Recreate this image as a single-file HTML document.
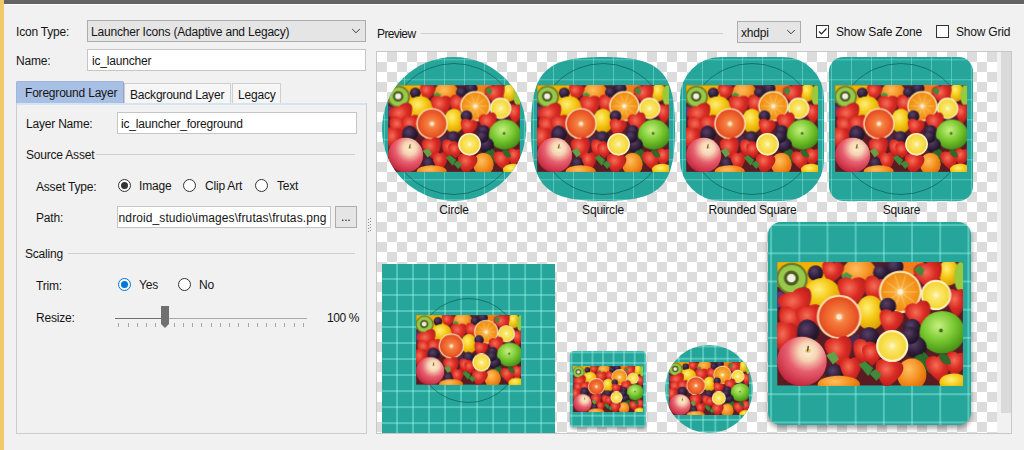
<!DOCTYPE html>
<html><head><meta charset="utf-8">
<style>
*{margin:0;padding:0;box-sizing:border-box}
html,body{width:1024px;height:450px;overflow:hidden;background:#f1f1f1;position:relative}
body{font-family:"Liberation Sans",sans-serif;font-size:12px;color:#111}
.a{position:absolute}
.t{position:absolute;font:12px/14px "Liberation Sans",sans-serif;white-space:nowrap;color:#151515;letter-spacing:-0.2px}
.box{position:absolute;border:1px solid #c5c5c5;background:#fff}
.combo{position:absolute;border:1px solid #adadad;background:#e5e5e5}
.radio{position:absolute;width:13px;height:13px;border:1px solid #333;border-radius:50%;background:#fff}
.radio.on::after{content:"";position:absolute;left:2px;top:2px;width:7px;height:7px;border-radius:50%;background:#333}
.radio.blue{border-color:#0078d7}
.radio.blue::after{content:"";position:absolute;left:2px;top:2px;width:7px;height:7px;border-radius:50%;background:#0078d7}
.chk{position:absolute;width:13px;height:13px;border:1px solid #333;background:#fff}
.sep{position:absolute;height:1px;background:#cfcfcf}
.tick{position:absolute;top:323px;width:1px;height:4px;background:#a6a6a6}
.icon{position:absolute;overflow:hidden;background-color:#26a69a;background-image:linear-gradient(90deg,rgba(170,255,245,.36) 1.5px,transparent 1.5px),linear-gradient(180deg,rgba(170,255,245,.36) 1.5px,transparent 1.5px)}
.fr{position:absolute;display:block}
.safe{position:absolute;border:1px solid rgba(10,80,72,.6);border-radius:50%}
.lbl{position:absolute;width:120px;text-align:center;font:12px/14px "Liberation Sans",sans-serif;color:#151515;white-space:nowrap;letter-spacing:-0.2px}
</style></head><body>
<!-- window chrome -->
<div class="a" style="left:0;top:0;width:4px;height:450px;background:#f0ca6a"></div>
<div class="a" style="left:4px;top:0;width:1020px;height:4px;background:#636363"></div>
<div class="a" style="left:4px;top:4px;width:1020px;height:1px;background:#fbfbfb"></div>

<!-- Icon type / name -->
<div class="t" style="left:16px;top:25px">Icon Type:</div>
<div class="combo" style="left:87px;top:20px;width:279px;height:22px"></div>
<div class="t" style="left:91px;top:25px">Launcher Icons (Adaptive and Legacy)</div>
<svg class="a" style="left:351px;top:28px" width="10" height="7" viewBox="0 0 10 7"><path d="M1.2 1 L5 4.8 L8.8 1" fill="none" stroke="#3a3a3a" stroke-width="1"/></svg>

<div class="t" style="left:16px;top:54px">Name:</div>
<div class="box" style="left:87px;top:49px;width:279px;height:22px"></div>
<div class="t" style="left:92px;top:54px">ic_launcher</div>

<!-- tabs -->
<div class="a" style="left:16px;top:103px;width:351px;height:331px;border:1px solid #cdcdcd;background:#f1f1f1"></div>
<div class="a" style="left:17px;top:103px;width:349px;height:2px;background:#d6e3f3"></div>
<div class="a" style="left:16px;top:81px;width:108px;height:22px;background:#a8c0e4;border:1px solid #a0b6d8;border-right-color:#95a6c2;border-bottom:none;border-radius:2px 2px 0 0"></div>
<div class="t" style="left:25px;top:86px">Foreground Layer</div>
<div class="a" style="left:124px;top:83px;width:107px;height:20px;background:#f6f6f6;border:1px solid #cfcfcf;border-bottom:none"></div>
<div class="t" style="left:130px;top:88px">Background Layer</div>
<div class="a" style="left:232px;top:83px;width:49px;height:20px;background:#f6f6f6;border:1px solid #cfcfcf;border-bottom:none"></div>
<div class="t" style="left:238px;top:88px">Legacy</div>

<div class="t" style="left:26px;top:117px">Layer Name:</div>
<div class="box" style="left:117px;top:112px;width:240px;height:22px"></div>
<div class="t" style="left:121px;top:117px">ic_launcher_foreground</div>

<div class="t" style="left:26px;top:148px">Source Asset</div>
<div class="sep" style="left:96px;top:154px;width:259px"></div>

<div class="t" style="left:36px;top:180px">Asset Type:</div>
<div class="radio on" style="left:118px;top:179px"></div>
<div class="t" style="left:139px;top:179px">Image</div>
<div class="radio" style="left:183px;top:179px"></div>
<div class="t" style="left:205px;top:179px">Clip Art</div>
<div class="radio" style="left:255px;top:179px"></div>
<div class="t" style="left:277px;top:179px">Text</div>

<div class="t" style="left:36px;top:211px">Path:</div>
<div class="box" style="left:117px;top:206px;width:214px;height:22px;overflow:hidden"><div class="t" style="right:3.5px;top:4px;letter-spacing:0.1px">ndroid_studio\images\frutas\frutas.png</div></div>
<div class="combo" style="left:335px;top:206px;width:22px;height:22px"></div>
<div class="t" style="left:341px;top:210px">...</div>

<div class="t" style="left:25px;top:247px">Scaling</div>
<div class="sep" style="left:68px;top:253px;width:287px"></div>

<div class="t" style="left:36px;top:279px">Trim:</div>
<div class="radio blue" style="left:118px;top:278px"></div>
<div class="t" style="left:139px;top:278px">Yes</div>
<div class="radio" style="left:178px;top:278px"></div>
<div class="t" style="left:199px;top:278px">No</div>

<div class="t" style="left:36px;top:311px">Resize:</div>
<div class="a" style="left:115px;top:318px;width:46px;height:1px;background:#707070"></div>
<div class="a" style="left:169px;top:318px;width:138px;height:1px;background:#a8a8a8"></div>
<div class="tick" style="left:118px"></div><div class="tick" style="left:128px"></div><div class="tick" style="left:137px"></div><div class="tick" style="left:146px"></div><div class="tick" style="left:155px"></div><div class="tick" style="left:165px"></div><div class="tick" style="left:174px"></div><div class="tick" style="left:183px"></div><div class="tick" style="left:192px"></div><div class="tick" style="left:201px"></div><div class="tick" style="left:211px"></div><div class="tick" style="left:220px"></div><div class="tick" style="left:229px"></div><div class="tick" style="left:238px"></div><div class="tick" style="left:248px"></div><div class="tick" style="left:257px"></div><div class="tick" style="left:266px"></div><div class="tick" style="left:275px"></div><div class="tick" style="left:284px"></div><div class="tick" style="left:294px"></div><div class="tick" style="left:303px"></div>
<svg class="a" style="left:160px;top:306px" width="10" height="23" viewBox="0 0 10 23"><path d="M1 0 H9 V18 L5 22 L1 18 Z" fill="#707070"/></svg>
<div class="t" style="left:327px;top:311px;letter-spacing:-0.4px">100 %</div>

<div class="a" style="left:368px;top:219px;width:1px;height:1px;background:#8a8a8a"></div><div class="a" style="left:370px;top:218px;width:1px;height:1px;background:#8a8a8a"></div><div class="a" style="left:368px;top:222px;width:1px;height:1px;background:#8a8a8a"></div><div class="a" style="left:370px;top:221px;width:1px;height:1px;background:#8a8a8a"></div><div class="a" style="left:368px;top:225px;width:1px;height:1px;background:#8a8a8a"></div><div class="a" style="left:370px;top:224px;width:1px;height:1px;background:#8a8a8a"></div><div class="a" style="left:368px;top:228px;width:1px;height:1px;background:#8a8a8a"></div><div class="a" style="left:370px;top:227px;width:1px;height:1px;background:#8a8a8a"></div><div class="a" style="left:368px;top:231px;width:1px;height:1px;background:#8a8a8a"></div><div class="a" style="left:370px;top:230px;width:1px;height:1px;background:#8a8a8a"></div>
<!-- preview header -->
<div class="t" style="left:377px;top:27px;letter-spacing:-0.6px">Preview</div>
<div class="sep" style="left:421px;top:33px;width:302px"></div>
<div class="combo" style="left:737px;top:21px;width:64px;height:22px"></div>
<div class="t" style="left:741px;top:26px">xhdpi</div>
<svg class="a" style="left:786px;top:29px" width="10" height="7" viewBox="0 0 10 7"><path d="M1.2 1 L5 4.8 L8.8 1" fill="none" stroke="#3a3a3a" stroke-width="1"/></svg>
<div class="chk" style="left:816px;top:25px"></div>
<svg class="a" style="left:816px;top:25px" width="13" height="13" viewBox="0 0 13 13"><path d="M3 6.5 L5.5 9 L10.5 3.5" fill="none" stroke="#222" stroke-width="1.2"/></svg>
<div class="t" style="left:836px;top:25px">Show Safe Zone</div>
<div class="chk" style="left:936px;top:25px"></div>
<div class="t" style="left:956px;top:25px">Show Grid</div>

<!-- preview panel -->
<div class="a" style="left:376px;top:51px;width:636px;height:383px;border:1px solid #c8c8c8;background:#f1f1f1;overflow:hidden">
  <div class="a" style="left:0;top:0;width:620px;height:381px;background:conic-gradient(#dcdcdc 25%,#fff 0 50%,#dcdcdc 0 75%,#fff 0);background-size:20px 20px"></div>
  <div class="a" style="left:624px;top:0;width:10px;height:361px;background:#dadada"></div>
</div>

<svg width="0" height="0" style="position:absolute"><defs>
<filter id="fblur" x="0" y="0" width="1" height="1"><feGaussianBlur stdDeviation="2"/></filter>
<radialGradient id="gs" cx=".4" cy=".35" r=".75"><stop offset="0" stop-color="#f47058"/><stop offset=".45" stop-color="#dc2c24"/><stop offset="1" stop-color="#a01a1a"/></radialGradient>
<radialGradient id="gb" cx=".4" cy=".35" r=".7"><stop offset="0" stop-color="#5a4068"/><stop offset=".6" stop-color="#2e1e38"/><stop offset="1" stop-color="#1a1020"/></radialGradient>
<radialGradient id="gos" cx=".5" cy=".5" r=".5"><stop offset="0" stop-color="#fcd890"/><stop offset=".35" stop-color="#f8a830"/><stop offset="1" stop-color="#f08a10"/></radialGradient>
<radialGradient id="gbo" cx=".5" cy=".5" r=".5"><stop offset="0" stop-color="#fcd0a0"/><stop offset=".3" stop-color="#f48040"/><stop offset=".8" stop-color="#ec5a28"/><stop offset="1" stop-color="#e04a20"/></radialGradient>
<radialGradient id="gls" cx=".5" cy=".5" r=".5"><stop offset="0" stop-color="#fffae0"/><stop offset=".3" stop-color="#fbe870"/><stop offset="1" stop-color="#f5d630"/></radialGradient>
<radialGradient id="gl" cx=".4" cy=".35" r=".7"><stop offset="0" stop-color="#fff07a"/><stop offset=".5" stop-color="#f5c814"/><stop offset="1" stop-color="#d89a00"/></radialGradient>
<radialGradient id="go" cx=".4" cy=".35" r=".7"><stop offset="0" stop-color="#ffc060"/><stop offset=".55" stop-color="#f49020"/><stop offset="1" stop-color="#d86a08"/></radialGradient>
<radialGradient id="gga" cx=".42" cy=".35" r=".7"><stop offset="0" stop-color="#c8f080"/><stop offset=".5" stop-color="#78c830"/><stop offset="1" stop-color="#3e8a14"/></radialGradient>
<radialGradient id="gra" cx=".62" cy=".3" r=".75"><stop offset="0" stop-color="#fcf2d8"/><stop offset=".25" stop-color="#f6d4b4"/><stop offset=".55" stop-color="#e86070"/><stop offset="1" stop-color="#c02038"/></radialGradient>
<symbol id="fruit" viewBox="0 0 600 400" preserveAspectRatio="none"><g filter="url(#fblur)">
<rect width="600" height="400" fill="#5a1c22"/>
<rect x="0" y="0" width="175" height="80" fill="#f2b000"/>
<ellipse cx="265" cy="38" rx="56" ry="50" fill="url(#go)" />
<ellipse cx="428" cy="14" rx="48" ry="28" fill="#f07c1c" />
<circle cx="379" cy="16" r="28" fill="url(#gb)" />
<circle cx="520" cy="10" r="25" fill="url(#gb)" />
<ellipse cx="553" cy="34" rx="33" ry="42" fill="url(#gl)" />
<ellipse cx="592" cy="48" rx="22" ry="48" fill="#9bc93a" />
<circle cx="124" cy="36" r="25" fill="url(#gb)" />
<path d="M -1 -0.45 C -1 -1.05 -0.15 -1.0 0 -0.8 C 0.15 -1.0 1 -1.05 1 -0.45 C 1 0.15 0.25 0.95 0 1.05 C -0.25 0.95 -1 0.15 -1 -0.45 Z" transform="translate(178 32) rotate(10) scale(35.6 35.8)" fill="url(#gs)"/>
<circle cx="334" cy="34" r="25" fill="url(#gb)" />
<path d="M -1 -0.45 C -1 -1.05 -0.15 -1.0 0 -0.8 C 0.15 -1.0 1 -1.05 1 -0.45 C 1 0.15 0.25 0.95 0 1.05 C -0.25 0.95 -1 0.15 -1 -0.45 Z" transform="translate(490 42) rotate(-15) scale(46.0 47.0)" fill="url(#gs)"/>
<path d="M440 25 l18 -16 l16 16 l-8 22 z" fill="#3f8a3a"/>
<path d="M205 45 l18 -12 l20 12 l-12 16 z" fill="#4a9a44"/>
<ellipse cx="48" cy="54" rx="51" ry="51" fill="#6a7a2a" />
<ellipse cx="48" cy="54" rx="44" ry="44" fill="#98c848" />
<ellipse cx="46" cy="52" rx="24" ry="24" fill="#4e5a24" />
<ellipse cx="46" cy="52" rx="14" ry="14" fill="#f0f0de" />
<ellipse cx="10" cy="122" rx="17" ry="26" fill="#5a3a80" />
<ellipse cx="146" cy="104" rx="58" ry="52" fill="url(#gl)" />
<path d="M -1 -0.45 C -1 -1.05 -0.15 -1.0 0 -0.8 C 0.15 -1.0 1 -1.05 1 -0.45 C 1 0.15 0.25 0.95 0 1.05 C -0.25 0.95 -1 0.15 -1 -0.45 Z" transform="translate(242 96) rotate(0) scale(47.1 49.3)" fill="url(#gs)"/>
<path d="M -1 -0.45 C -1 -1.05 -0.15 -1.0 0 -0.8 C 0.15 -1.0 1 -1.05 1 -0.45 C 1 0.15 0.25 0.95 0 1.05 C -0.25 0.95 -1 0.15 -1 -0.45 Z" transform="translate(316 90) rotate(20) scale(40.2 43.7)" fill="url(#gs)"/>
<path d="M -1 -0.45 C -1 -1.05 -0.15 -1.0 0 -0.8 C 0.15 -1.0 1 -1.05 1 -0.45 C 1 0.15 0.25 0.95 0 1.05 C -0.25 0.95 -1 0.15 -1 -0.45 Z" transform="translate(64 135) rotate(-20) scale(55.2 48.2)" fill="url(#gs)"/>
<path d="M -1 -0.45 C -1 -1.05 -0.15 -1.0 0 -0.8 C 0.15 -1.0 1 -1.05 1 -0.45 C 1 0.15 0.25 0.95 0 1.05 C -0.25 0.95 -1 0.15 -1 -0.45 Z" transform="translate(45 190) rotate(15) scale(43.7 44.8)" fill="url(#gs)"/>
<path d="M -1 -0.45 C -1 -1.05 -0.15 -1.0 0 -0.8 C 0.15 -1.0 1 -1.05 1 -0.45 C 1 0.15 0.25 0.95 0 1.05 C -0.25 0.95 -1 0.15 -1 -0.45 Z" transform="translate(106 182) rotate(-10) scale(43.7 44.8)" fill="url(#gs)"/>
<circle cx="97" cy="216" r="30" fill="url(#gb)" />
<path d="M -1 -0.45 C -1 -1.05 -0.15 -1.0 0 -0.8 C 0.15 -1.0 1 -1.05 1 -0.45 C 1 0.15 0.25 0.95 0 1.05 C -0.25 0.95 -1 0.15 -1 -0.45 Z" transform="translate(578 131) rotate(0) scale(33.3 45.9)" fill="url(#gs)"/>
<circle cx="397" cy="97" r="69" fill="#fbe4b0" />
<circle cx="397" cy="97" r="62.1" fill="url(#gos)" />
<line x1="397" y1="97" x2="453.6" y2="97.0" stroke="#fde3b0" stroke-width="2.8" opacity=".55"/>
<line x1="397" y1="97" x2="442.8" y2="130.3" stroke="#fde3b0" stroke-width="2.8" opacity=".55"/>
<line x1="397" y1="97" x2="414.5" y2="150.8" stroke="#fde3b0" stroke-width="2.8" opacity=".55"/>
<line x1="397" y1="97" x2="379.5" y2="150.8" stroke="#fde3b0" stroke-width="2.8" opacity=".55"/>
<line x1="397" y1="97" x2="351.2" y2="130.3" stroke="#fde3b0" stroke-width="2.8" opacity=".55"/>
<line x1="397" y1="97" x2="340.4" y2="97.0" stroke="#fde3b0" stroke-width="2.8" opacity=".55"/>
<line x1="397" y1="97" x2="351.2" y2="63.7" stroke="#fde3b0" stroke-width="2.8" opacity=".55"/>
<line x1="397" y1="97" x2="379.5" y2="43.2" stroke="#fde3b0" stroke-width="2.8" opacity=".55"/>
<line x1="397" y1="97" x2="414.5" y2="43.2" stroke="#fde3b0" stroke-width="2.8" opacity=".55"/>
<line x1="397" y1="97" x2="442.8" y2="63.7" stroke="#fde3b0" stroke-width="2.8" opacity=".55"/>
<circle cx="397" cy="97" r="8.97" fill="#fdf0d8" />
<circle cx="512" cy="107" r="49" fill="#fdf4cc" />
<circle cx="512" cy="107" r="43" fill="url(#gls)" />
<ellipse cx="300" cy="165" rx="46" ry="56" fill="url(#gl)" />
<circle cx="357" cy="143" r="27" fill="url(#gb)" />
<path d="M -1 -0.45 C -1 -1.05 -0.15 -1.0 0 -0.8 C 0.15 -1.0 1 -1.05 1 -0.45 C 1 0.15 0.25 0.95 0 1.05 C -0.25 0.95 -1 0.15 -1 -0.45 Z" transform="translate(366 194) rotate(10) scale(39.1 40.3)" fill="url(#gs)"/>
<path d="M -1 -0.45 C -1 -1.05 -0.15 -1.0 0 -0.8 C 0.15 -1.0 1 -1.05 1 -0.45 C 1 0.15 0.25 0.95 0 1.05 C -0.25 0.95 -1 0.15 -1 -0.45 Z" transform="translate(458 172) rotate(-15) scale(41.4 45.9)" fill="url(#gs)"/>
<circle cx="435" cy="212" r="28" fill="url(#gb)" />
<path d="M -1 -0.45 C -1 -1.05 -0.15 -1.0 0 -0.8 C 0.15 -1.0 1 -1.05 1 -0.45 C 1 0.15 0.25 0.95 0 1.05 C -0.25 0.95 -1 0.15 -1 -0.45 Z" transform="translate(25 247) rotate(5) scale(39.1 54.9)" fill="url(#gs)"/>
<circle cx="100" cy="225" r="35" fill="url(#gb)" />
<circle cx="258" cy="258" r="24" fill="#4a2a50" />
<circle cx="297" cy="243" r="32" fill="url(#gb)" />
<circle cx="200" cy="178" r="72" fill="#fbdcb0" />
<circle cx="200" cy="178" r="65" fill="url(#gbo)" />
<circle cx="200" cy="178" r="9" fill="#fbe8d0" />
<ellipse cx="532" cy="228" rx="73" ry="69" fill="url(#gga)" />
<circle cx="528" cy="222" r="6" fill="#3a6a1a" />
<circle cx="447" cy="276" r="35" fill="url(#gb)" />
<circle cx="429" cy="238" r="28" fill="url(#gb)" />
<path d="M430 320 q40 -40 60 -10 q-20 40 -60 30 z" fill="#2e6a2a"/>
<path d="M -1 -0.45 C -1 -1.05 -0.15 -1.0 0 -0.8 C 0.15 -1.0 1 -1.05 1 -0.45 C 1 0.15 0.25 0.95 0 1.05 C -0.25 0.95 -1 0.15 -1 -0.45 Z" transform="translate(201 290) rotate(-10) scale(43.7 50.4)" fill="url(#gs)"/>
<path d="M -1 -0.45 C -1 -1.05 -0.15 -1.0 0 -0.8 C 0.15 -1.0 1 -1.05 1 -0.45 C 1 0.15 0.25 0.95 0 1.05 C -0.25 0.95 -1 0.15 -1 -0.45 Z" transform="translate(280 292) rotate(15) scale(39.1 41.4)" fill="url(#gs)"/>
<circle cx="185" cy="360" r="29" fill="url(#gb)" />
<path d="M -1 -0.45 C -1 -1.05 -0.15 -1.0 0 -0.8 C 0.15 -1.0 1 -1.05 1 -0.45 C 1 0.15 0.25 0.95 0 1.05 C -0.25 0.95 -1 0.15 -1 -0.45 Z" transform="translate(237 350) rotate(0) scale(34.5 43.7)" fill="url(#gs)"/>
<path d="M262 332 l22 -10 l26 22 l-16 26 z" fill="#3f8a3a"/>
<ellipse cx="199" cy="396" rx="68" ry="28" fill="url(#go)" />
<ellipse cx="434" cy="364" rx="47" ry="52" fill="url(#go)" />
<path d="M470 290 q32 22 22 72 q-27 -22 -22 -72 z" fill="#2c6a2c"/>
<path d="M -1 -0.45 C -1 -1.05 -0.15 -1.0 0 -0.8 C 0.15 -1.0 1 -1.05 1 -0.45 C 1 0.15 0.25 0.95 0 1.05 C -0.25 0.95 -1 0.15 -1 -0.45 Z" transform="translate(307 300) rotate(0) scale(33.3 34.7)" fill="url(#gs)"/>
<path d="M -1 -0.45 C -1 -1.05 -0.15 -1.0 0 -0.8 C 0.15 -1.0 1 -1.05 1 -0.45 C 1 0.15 0.25 0.95 0 1.05 C -0.25 0.95 -1 0.15 -1 -0.45 Z" transform="translate(359 360) rotate(10) scale(44.8 45.9)" fill="url(#gs)"/>
<path d="M -1 -0.45 C -1 -1.05 -0.15 -1.0 0 -0.8 C 0.15 -1.0 1 -1.05 1 -0.45 C 1 0.15 0.25 0.95 0 1.05 C -0.25 0.95 -1 0.15 -1 -0.45 Z" transform="translate(522 344) rotate(-10) scale(40.2 44.8)" fill="url(#gs)"/>
<path d="M -1 -0.45 C -1 -1.05 -0.15 -1.0 0 -0.8 C 0.15 -1.0 1 -1.05 1 -0.45 C 1 0.15 0.25 0.95 0 1.05 C -0.25 0.95 -1 0.15 -1 -0.45 Z" transform="translate(576 330) rotate(10) scale(34.5 40.3)" fill="url(#gs)"/>
<ellipse cx="570" cy="390" rx="47" ry="29" fill="url(#gl)" />
<circle cx="371" cy="272" r="52" fill="#fdf2c8" />
<circle cx="371" cy="272" r="45" fill="url(#gls)" />
<path d="M158 302 l26 -12 l16 26 l-20 16 z" fill="#64a048"/>
<path d="M520 300 q35 -10 40 30 q-30 10 -40 -30 z" fill="#2e6a2a"/>
<path d="M298 362 l18 -15 l22 18 l-18 20 z" fill="#3f8a3a"/>
<ellipse cx="80" cy="322" rx="80" ry="80" fill="url(#gra)" />
<ellipse cx="100" cy="288" rx="10" ry="7" fill="#e8c060" opacity=".7"/><path d="M98 290 l3 -18" stroke="#6a5018" stroke-width="5"/>
</g></symbol>
</defs></svg>
<div class="a" style="left:0;top:0;width:997px;height:433px;overflow:hidden">
<div class="icon" style="left:382px;top:57px;width:144px;height:144px;border-radius:50%;background-size:20.000px 20.000px;background-position:2.00px 2.25px;"><div class="safe" style="left:6.00px;top:6.00px;width:132.00px;height:132.00px"></div><svg class="fr" style="left:6.05px;top:28.08px" width="131.90" height="87.12"><use href="#fruit" width="100%" height="100%"/></svg></div>
<div class="icon" style="left:531px;top:57px;width:144px;height:144px;clip-path:path('M 72.0 0 C 14.399999999999999 0 0 14.399999999999999 0 72.0 C 0 129.6 14.399999999999999 144.0 72.0 144.0 C 129.6 144.0 144.0 129.6 144.0 72.0 C 144.0 14.399999999999999 129.6 0 72.0 0 Z');background-size:20.000px 20.000px;background-position:2.00px 2.25px;"><div class="safe" style="left:6.00px;top:6.00px;width:132.00px;height:132.00px"></div><svg class="fr" style="left:6.05px;top:28.08px" width="131.90" height="87.12"><use href="#fruit" width="100%" height="100%"/></svg></div>
<div class="icon" style="left:680px;top:57px;width:144px;height:144px;border-radius:41px;background-size:20.000px 20.000px;background-position:2.00px 2.25px;"><div class="safe" style="left:6.00px;top:6.00px;width:132.00px;height:132.00px"></div><svg class="fr" style="left:6.05px;top:28.08px" width="131.90" height="87.12"><use href="#fruit" width="100%" height="100%"/></svg></div>
<div class="icon" style="left:829px;top:57px;width:144px;height:144px;border-radius:14.4px;background-size:20.000px 20.000px;background-position:2.00px 2.25px;"><div class="safe" style="left:6.00px;top:6.00px;width:132.00px;height:132.00px"></div><svg class="fr" style="left:6.05px;top:28.08px" width="131.90" height="87.12"><use href="#fruit" width="100%" height="100%"/></svg></div>
<div class="icon" style="left:382px;top:264px;width:173px;height:173px;background-size:16.019px 16.019px;background-position:-1.95px -1.95px;"><div class="safe" style="left:33.70px;top:33.70px;width:105.60px;height:105.60px"></div><svg class="fr" style="left:33.56px;top:51.21px" width="105.88" height="69.72"><use href="#fruit" width="100%" height="100%"/></svg></div>
<div class="icon" style="left:570px;top:351px;width:76px;height:76px;border-radius:4px;box-shadow:0 2px 3px rgba(0,0,0,.35);background-size:10.556px 10.556px;background-position:0.45px 0.45px;"><svg class="fr" style="left:2.89px;top:15.12px" width="70.38" height="46.21"><use href="#fruit" width="100%" height="100%"/></svg></div>
<div class="icon" style="left:665px;top:345px;width:88px;height:88px;border-radius:50%;background-size:12.222px 12.222px;background-position:0.55px 0.55px;"><svg class="fr" style="left:3.70px;top:17.16px" width="80.61" height="53.24"><use href="#fruit" width="100%" height="100%"/></svg></div>
<div class="icon" style="left:767.5px;top:222.2px;width:203px;height:203px;border-radius:13px;box-shadow:0 3px 5px rgba(0,0,0,.38);background-size:28.194px 28.194px;background-position:2.15px 2.15px;"><svg class="fr" style="left:9.13px;top:40.19px" width="186.35" height="123.42"><use href="#fruit" width="100%" height="100%"/></svg></div>
<div class="lbl" style="left:394px;top:203px">Circle</div>
<div class="lbl" style="left:543px;top:203px">Squircle</div>
<div class="lbl" style="left:692.5px;top:203px">Rounded Square</div>
<div class="lbl" style="left:841.5px;top:203px">Square</div>
</div>
</body></html>
